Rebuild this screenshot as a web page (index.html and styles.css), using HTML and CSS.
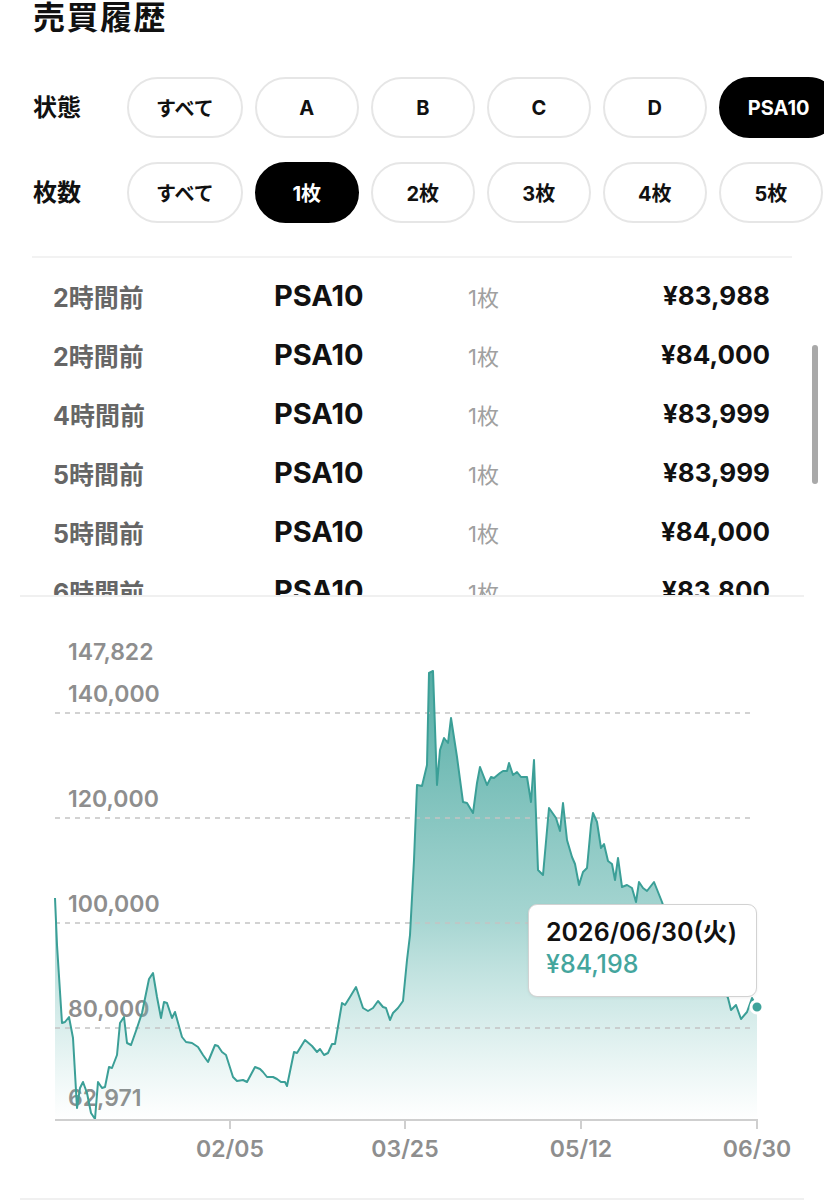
FILE: index.html
```html
<!DOCTYPE html>
<html lang="ja">
<head>
    <meta charset="UTF-8">
    <title>売買履歴</title>
    <link rel="stylesheet" href="styles.css">
</head>
<body>
    <h1 class="title">売買履歴</h1>

    <div class="filters">
        <div class="filter-row">
            <span class="filter-label">状態</span>
            <div class="chips">
                <button class="chip">すべて</button>
                <button class="chip">A</button>
                <button class="chip">B</button>
                <button class="chip">C</button>
                <button class="chip">D</button>
                <button class="chip active">PSA10</button>
            </div>
        </div>
        <div class="filter-row">
            <span class="filter-label">枚数</span>
            <div class="chips">
                <button class="chip">すべて</button>
                <button class="chip active">1枚</button>
                <button class="chip">2枚</button>
                <button class="chip">3枚</button>
                <button class="chip">4枚</button>
                <button class="chip">5枚</button>
            </div>
        </div>
    </div>

    <section class="history">
        <div class="history-list">
            <div class="row"><span class="time">2時間前</span><span class="grade">PSA10</span><span class="qty">1枚</span><span class="price">¥83,988</span></div>
            <div class="row"><span class="time">2時間前</span><span class="grade">PSA10</span><span class="qty">1枚</span><span class="price">¥84,000</span></div>
            <div class="row"><span class="time">4時間前</span><span class="grade">PSA10</span><span class="qty">1枚</span><span class="price">¥83,999</span></div>
            <div class="row"><span class="time">5時間前</span><span class="grade">PSA10</span><span class="qty">1枚</span><span class="price">¥83,999</span></div>
            <div class="row"><span class="time">5時間前</span><span class="grade">PSA10</span><span class="qty">1枚</span><span class="price">¥84,000</span></div>
            <div class="row"><span class="time">6時間前</span><span class="grade">PSA10</span><span class="qty">1枚</span><span class="price">¥83,800</span></div>
            <div class="row"><span class="time">7時間前</span><span class="grade">PSA10</span><span class="qty">1枚</span><span class="price">¥83,900</span></div>
        </div>
        <div class="scroll-thumb"></div>
    </section>

    <section class="chart">
        <svg class="chart-svg" width="784" height="601" viewBox="20 597 784 601">
            <defs>
                <linearGradient id="areaFill" gradientUnits="userSpaceOnUse" x1="0" y1="672" x2="0" y2="1120">
                    <stop offset="0" stop-color="#46a59d" stop-opacity="0.92"/>
                    <stop offset="0.55" stop-color="#5db3ac" stop-opacity="0.55"/>
                    <stop offset="1" stop-color="#7cc4be" stop-opacity="0"/>
                </linearGradient>
            </defs>

            <!-- y軸ラベル -->
            <text class="axis-label" x="68" y="660">147,822</text>
            <text class="axis-label" x="68" y="702">140,000</text>
            <text class="axis-label" x="68" y="807">120,000</text>
            <text class="axis-label" x="68" y="912">100,000</text>
            <text class="axis-label" x="68" y="1017">80,000</text>
            <text class="axis-label" x="68" y="1106">62,971</text>

            <polygon class="area" points="55,898 57,945 62,1023 65,1022 69,1017 73,1038 77,1108 80,1088 83,1082 87,1093 91,1113 95,1119 98,1082 102,1088 105,1087 109,1067 112,1068 117,1055 120,1023 124,1017 127,1043 131,1045 137,1028 142,1013 149,979 153,973 157,997 161,1018 164,1002 167,1003 172,1018 175,1012 182,1037 186,1042 192,1043 198,1047 203,1055 208,1062 215,1045 218,1046 222,1052 226,1055 233,1077 237,1081 243,1080 247,1082 255,1067 260,1069 263,1072 267,1077 273,1077 277,1079 281,1082 285,1082 287,1086 294,1052 297,1053 305,1040 312,1046 317,1052 320,1049 324,1055 328,1053 332,1044 335,1044 342,1003 345,1005 350,997 356,987 363,1008 368,1011 373,1008 378,1001 383,1007 386,1008 390,1020 393,1013 398,1008 403,1001 407,960 410,935 414,860 417,785 422,786 427,765 429,673 433,671 437,785 440,750 444,738 448,743 451,718 457,757 463,802 467,803 473,813 477,783 480,767 487,785 491,777 494,778 500,773 503,771 507,771 509,763 513,775 517,772 521,777 527,777 531,802 534,760 538,870 543,875 549,808 556,818 560,831 563,803 567,840 572,857 575,864 579,885 583,872 587,868 591,825 593,813 597,822 601,848 604,844 608,861 612,864 615,880 618,858 622,887 627,885 632,888 636,902 639,882 643,888 647,891 654,882 662,902 668,920 675,935 684,930 692,950 700,960 708,955 716,975 722,985 728,998 731,1010 736,1005 741,1019 747,1012 752,998 757,1007 757,1120 55,1120"/>

            <!-- グリッド -->
            <line class="grid" x1="55" y1="713" x2="752" y2="713"/>
            <line class="grid" x1="55" y1="818" x2="752" y2="818"/>
            <line class="grid" x1="55" y1="923" x2="752" y2="923"/>
            <line class="grid" x1="55" y1="1028" x2="752" y2="1028"/>

            <polyline class="line" points="55,898 57,945 62,1023 65,1022 69,1017 73,1038 77,1108 80,1088 83,1082 87,1093 91,1113 95,1119 98,1082 102,1088 105,1087 109,1067 112,1068 117,1055 120,1023 124,1017 127,1043 131,1045 137,1028 142,1013 149,979 153,973 157,997 161,1018 164,1002 167,1003 172,1018 175,1012 182,1037 186,1042 192,1043 198,1047 203,1055 208,1062 215,1045 218,1046 222,1052 226,1055 233,1077 237,1081 243,1080 247,1082 255,1067 260,1069 263,1072 267,1077 273,1077 277,1079 281,1082 285,1082 287,1086 294,1052 297,1053 305,1040 312,1046 317,1052 320,1049 324,1055 328,1053 332,1044 335,1044 342,1003 345,1005 350,997 356,987 363,1008 368,1011 373,1008 378,1001 383,1007 386,1008 390,1020 393,1013 398,1008 403,1001 407,960 410,935 414,860 417,785 422,786 427,765 429,673 433,671 437,785 440,750 444,738 448,743 451,718 457,757 463,802 467,803 473,813 477,783 480,767 487,785 491,777 494,778 500,773 503,771 507,771 509,763 513,775 517,772 521,777 527,777 531,802 534,760 538,870 543,875 549,808 556,818 560,831 563,803 567,840 572,857 575,864 579,885 583,872 587,868 591,825 593,813 597,822 601,848 604,844 608,861 612,864 615,880 618,858 622,887 627,885 632,888 636,902 639,882 643,888 647,891 654,882 662,902 668,920 675,935 684,930 692,950 700,960 708,955 716,975 722,985 728,998 731,1010 736,1005 741,1019 747,1012 752,998 757,1007"/>

            <!-- x軸 -->
            <line class="axis" x1="55" y1="1120" x2="758" y2="1120"/>
            <line class="axis" x1="230" y1="1120" x2="230" y2="1129"/>
            <line class="axis" x1="405" y1="1120" x2="405" y2="1129"/>
            <line class="axis" x1="581" y1="1120" x2="581" y2="1129"/>
            <line class="axis" x1="757" y1="1120" x2="757" y2="1129"/>
            <text class="axis-label date" x="230" y="1157">02/05</text>
            <text class="axis-label date" x="405" y="1157">03/25</text>
            <text class="axis-label date" x="581" y="1157">05/12</text>
            <text class="axis-label date" x="757" y="1157">06/30</text>

            <circle class="dot" cx="757" cy="1007" r="6"/>
        </svg>

        <div class="tooltip">
            <div class="tooltip-date">2026/06/30(火)</div>
            <div class="tooltip-price">¥84,198</div>
        </div>
    </section>
</body>
</html>
```

FILE: styles.css
```css
body {
    margin: 0;
    font-family: Inter, "Noto Sans CJK JP", sans-serif;
    background: #fff;
    color: #111;
    overflow: hidden;
}
.title {
    margin: 0 0 0 33px;
    font-size: 32px;
    line-height: 36px;
    font-weight: 700;
    letter-spacing: 1.5px;
}
.filters {
    margin-top: 41px;
    display: flex;
    flex-direction: column;
    gap: 24px;
}
.filter-row {
    display: flex;
    align-items: center;
    padding-left: 33px;
}
.filter-label {
    width: 94px;
    flex-shrink: 0;
    font-size: 24px;
    font-weight: 700;
    line-height: 1;
}
.chips {
    display: flex;
    gap: 12px;
    overflow: hidden;
}
.chip {
    flex-shrink: 0;
    box-sizing: border-box;
    height: 61px;
    min-width: 104px;
    padding: 0 27px;
    border: 2px solid #e6e6e6;
    border-radius: 31px;
    background: #fff;
    color: #111;
    font-family: Inter, "Noto Sans CJK JP", sans-serif;
    font-size: 20px;
    font-weight: 700;
}
.chip.active {
    background: #000;
    border-color: #000;
    color: #fff;
}
.history {
    position: relative;
    margin-top: 33px;
    height: 339px;
    overflow: hidden;
}
.history-list {
    margin: 0 32px;
    border-top: 2px solid #f2f2f2;
    padding-top: 8px;
}
.row {
    display: grid;
    grid-template-columns: 221px 194px 1fr auto;
    align-items: center;
    height: 59px;
    padding: 0 22px 0 21px;
}
.time {
    font-size: 25px;
    font-weight: 700;
    color: #666;
}
.grade {
    font-size: 29px;
    font-weight: 700;
}
.qty {
    font-size: 22px;
    color: #a0a0a0;
}
.price {
    font-size: 26px;
    font-weight: 700;
}
.scroll-thumb {
    position: absolute;
    right: 6px;
    top: 89px;
    width: 6px;
    height: 139px;
    border-radius: 3px;
    background: #a9a9a9;
}
.chart {
    position: relative;
    margin: 0 20px;
    border-top: 2px solid #f0f0f0;
    border-bottom: 2px solid #f0f0f0;
    height: 601px;
}
.chart-svg {
    display: block;
}
.axis-label {
    font-family: Inter, sans-serif;
    font-size: 23px;
    font-weight: 600;
    fill: #8e8e8e;
}
.axis-label.date {
    text-anchor: middle;
}
.area {
    fill: url(#areaFill);
}
.line {
    fill: none;
    stroke: #3b9f97;
    stroke-width: 2;
    stroke-linejoin: round;
}
.grid {
    stroke: #c4c4c4;
    stroke-width: 1.5;
    stroke-dasharray: 5 5;
}
.axis {
    stroke: #cfcfcf;
    stroke-width: 2;
}
.dot {
    fill: #3fa39b;
    stroke: #fff;
    stroke-width: 3;
}
.tooltip {
    position: absolute;
    left: 508px;
    top: 307px;
    box-sizing: border-box;
    width: 229px;
    height: 93px;
    padding: 11px 0 0 17px;
    background: #fff;
    border: 1.5px solid #d2d2d2;
    border-radius: 9px;
    box-shadow: 0 1px 3px rgba(0, 0, 0, 0.06);
}
.tooltip-date {
    font-size: 25px;
    font-weight: 600;
    line-height: 32px;
    color: #111;
}
.tooltip-price {
    font-size: 25px;
    font-weight: 500;
    line-height: 32px;
    color: #44a59d;
}
```
